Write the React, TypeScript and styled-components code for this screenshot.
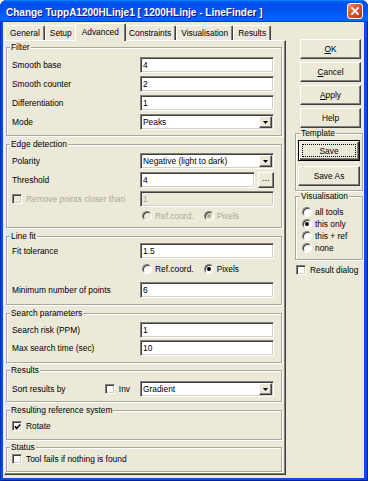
import React from 'react';
import styled, { createGlobalStyle } from 'styled-components';

const FACE = '#ece9d8';
const GREY_TEXT = '#aca899';

const GlobalStyle = createGlobalStyle`
  *, *::before, *::after { box-sizing: border-box; }
  html, body { margin: 0; padding: 0; background: #ffffff; }
  body {
    font-family: "Liberation Sans", Arial, sans-serif;
    font-size: 8.4px;
    color: #000;
  }
`;

const TABS = ['General', 'Setup', 'Advanced', 'Constraints', 'Visualisation', 'Results'];

interface DropdownProps {
  value: string;
}

const Dropdown = ({ value }: DropdownProps) => (
  <SelectBox>
    <SelectValue>{value}</SelectValue>
    <DropButton>
      <svg width="5" height="3" viewBox="0 0 5 3">
        <polygon points="0,0 5,0 2.5,3" fill="#000" />
      </svg>
    </DropButton>
  </SelectBox>
);

interface CheckProps {
  label: string;
  checked?: boolean;
  disabled?: boolean;
}

const Check = ({ label, checked, disabled }: CheckProps) => (
  <CheckLabel $disabled={disabled}>
    <CheckBox $disabled={disabled}>
      {checked && (
        <svg width="7" height="7" viewBox="0 0 7 7">
          <path d="M0.8 3.4 L2.7 5.3 L6.3 1.5" stroke="#000" strokeWidth="1.5" fill="none" />
        </svg>
      )}
    </CheckBox>
    {label}
  </CheckLabel>
);

const Radio = ({ label, checked, disabled }: CheckProps) => (
  <CheckLabel $disabled={disabled} $gap={3}>
    <RadioCircle $disabled={disabled}>{checked && <RadioDot $disabled={disabled} />}</RadioCircle>
    {label}
  </CheckLabel>
);

const App = () => (
  <>
    <GlobalStyle />
    <Window>
      <TitleBar>
        <Title>Change TuppA1200HLinje1 [ 1200HLinje - LineFinder ]</Title>
        <CloseButton type="button" aria-label="Close">
          <svg width="8" height="8" viewBox="0 0 8 8">
            <path d="M1 1 L7 7 M7 1 L1 7" stroke="#fff" strokeWidth="1.8" strokeLinecap="square" />
          </svg>
        </CloseButton>
      </TitleBar>
      <Body>
        <TabControl>
          <TabStrip>
            {TABS.map((tab) => (
              <Tab key={tab} $active={tab === 'Advanced'}>
                {tab}
              </Tab>
            ))}
          </TabStrip>
          <TabPanel>
            <Group $pt={5} $pb={5}>
              <Legend>Filter</Legend>
              <FieldGrid>
                <Label>Smooth base</Label>
                <Field defaultValue="4" />
                <Label>Smooth counter</Label>
                <Field defaultValue="2" />
                <Label>Differentiation</Label>
                <Field defaultValue="1" />
                <Label>Mode</Label>
                <Dropdown value="Peaks" />
              </FieldGrid>
            </Group>

            <Group $mt={4} $pb={5}>
              <Legend>Edge detection</Legend>
              <FieldGrid>
                <Label>Polarity</Label>
                <Dropdown value="Negative (light to dark)" />
                <Label>Threshold</Label>
                <FieldWithButton>
                  <Field defaultValue="4" />
                  <SmallButton type="button">...</SmallButton>
                </FieldWithButton>
                <Check label="Remove points closer than" disabled />
                <Field defaultValue="1" disabled />
                <span />
                <RadioRow>
                  <Radio label="Ref.coord." disabled />
                  <Radio label="Pixels" checked disabled />
                </RadioRow>
              </FieldGrid>
            </Group>

            <Group $mt={4} $pt={2} $pb={6}>
              <Legend>Line fit</Legend>
              <FieldGrid $gap={4}>
                <Label>Fit tolerance</Label>
                <Field defaultValue="1.5" />
                <span />
                <RadioRow $mb={3}>
                  <Radio label="Ref.coord." />
                  <Radio label="Pixels" checked />
                </RadioRow>
                <Label>Minimum number of points</Label>
                <Field defaultValue="6" />
              </FieldGrid>
            </Group>

            <Group $mt={4} $pb={6}>
              <Legend>Search parameters</Legend>
              <FieldGrid $gap={2}>
                <Label>Search risk (PPM)</Label>
                <Field defaultValue="1" />
                <Label>Max search time (sec)</Label>
                <Field defaultValue="10" />
              </FieldGrid>
            </Group>

            <Group $mt={3} $pt={6} $pb={4}>
              <Legend>Results</Legend>
              <FieldGrid>
                <SortCell>
                  <Label>Sort results by</Label>
                  <Check label="Inv" />
                </SortCell>
                <Dropdown value="Gradient" />
              </FieldGrid>
            </Group>

            <Group $mt={4} $pt={5} $pb={7}>
              <Legend>Resulting reference system</Legend>
              <Check label="Rotate" checked />
            </Group>

            <Group $mt={3} $pt={1} $pb={6}>
              <Legend>Status</Legend>
              <Check label="Tool fails if nothing is found" />
            </Group>
          </TabPanel>
        </TabControl>

        <SideColumn>
          <ButtonStack>
            <DialogButton type="button">
              <u>O</u>K
            </DialogButton>
            <DialogButton type="button">
              <u>C</u>ancel
            </DialogButton>
            <DialogButton type="button">
              <u>A</u>pply
            </DialogButton>
            <DialogButton type="button">Help</DialogButton>
          </ButtonStack>

          <SideGroup $mt={1} $pt={2} $pb={4}>
            <Legend $offset={2}>Template</Legend>
            <TemplateButtons>
              <DialogButton type="button" $default>
                Save
              </DialogButton>
              <DialogButton type="button">Save As</DialogButton>
            </TemplateButtons>
          </SideGroup>

          <SideGroup $mt={1} $pt={5} $pb={5}>
            <Legend $offset={2}>Visualisation</Legend>
            <RadioList>
              <Radio label="all tools" />
              <Radio label="this only" checked />
              <Radio label="this + ref" />
              <Radio label="none" />
            </RadioList>
          </SideGroup>

          <ResultDialog>
            <Check label="Result dialog" />
          </ResultDialog>
        </SideColumn>
      </Body>
    </Window>
  </>
);

export default App;

const Window = styled.div`
  width: 368px;
  height: 481px;
  display: flex;
  flex-direction: column;
  background: #0a4ee0;
  border-radius: 7px 7px 0 0;
  overflow: hidden;
  box-shadow: inset 1px 0 0 #0031c4, inset -1px 0 0 #00209e, inset 0 -1px 0 #00209e;
`;

const TitleBar = styled.div`
  height: 22px;
  flex: none;
  display: flex;
  align-items: center;
  justify-content: space-between;
  padding: 0 5px 0 6px;
  background: linear-gradient(
    180deg,
    #0997ff,
    #0053ee 8%,
    #0050ee 40%,
    #0066ff 88%,
    #0066ff 93%,
    #005bff 95%,
    #003dd7 96%,
    #003dd7
  );
`;

const Title = styled.span`
  padding-top: 3px;
  color: #fff;
  font-weight: bold;
  font-size: 10px;
  white-space: nowrap;
  text-shadow: 1px 1px 0 #0f1089;
`;

const CloseButton = styled.button`
  width: 16px;
  height: 16px;
  padding: 0;
  display: flex;
  align-items: center;
  justify-content: center;
  border: 1px solid #fff;
  border-radius: 3px;
  background: linear-gradient(135deg, #f4a68c 0%, #e2623f 30%, #d4451f 70%, #b83110 100%);
`;

const Body = styled.div`
  flex: 1;
  display: flex;
  gap: 9px;
  margin: 0 4px 4px 3px;
  padding: 0 1px 3px 1px;
  background: ${FACE};
`;

const TabControl = styled.div`
  width: 282px;
  display: flex;
  flex-direction: column;
`;

const TabStrip = styled.div`
  height: 18px;
  flex: none;
  display: flex;
  align-items: flex-end;
  padding-left: 1px;
`;

const Tab = styled.div<{ $active?: boolean }>`
  position: relative;
  z-index: ${({ $active }) => ($active ? 1 : 0)};
  height: ${({ $active }) => ($active ? 18 : 15)}px;
  margin: ${({ $active }) => ($active ? '0 -2px -1px' : '0')};
  padding: ${({ $active }) => ($active ? '0 6px 2px' : '0 4px')};
  display: flex;
  align-items: center;
  white-space: nowrap;
  background: ${FACE};
  border: 1px solid;
  border-bottom: none;
  border-color: #fff #404040 transparent #fff;
  border-radius: 2px 2px 0 0;
  box-shadow: inset -1px 0 0 #808080;
`;

const TabPanel = styled.div`
  flex: 1;
  display: flex;
  flex-direction: column;
  padding: 2px 3px 2px 1px;
  border: 1px solid;
  border-color: #fff #404040 #404040 #fff;
  box-shadow: inset -1px -1px 0 #808080;
`;

const Group = styled.fieldset<{ $mt?: number; $pt?: number; $pb?: number }>`
  margin: ${({ $mt }) => $mt ?? 0}px 0 0;
  padding: ${({ $pt }) => $pt ?? 4}px 7px ${({ $pb }) => $pb ?? 5}px 5px;
  min-width: 0;
  border: 1px solid #aca899;
  box-shadow: inset 1px 1px 0 #fff, 1px 1px 0 #fff;
`;

const SideGroup = styled(Group)`
  padding-left: 2px;
  padding-right: 2px;
`;

const Legend = styled.legend<{ $offset?: number }>`
  margin-left: ${({ $offset }) => $offset ?? -2}px;
  padding: 0 1px;
  line-height: 9px;
  background: ${FACE};
  white-space: nowrap;
`;

const FieldGrid = styled.div<{ $gap?: number }>`
  display: grid;
  grid-template-columns: 128px 134px;
  row-gap: ${({ $gap }) => $gap ?? 3}px;
  align-items: center;
`;

const Label = styled.span`
  white-space: nowrap;
`;

const Field = styled.input`
  width: 100%;
  height: 16px;
  margin: 0;
  padding: 0 2px;
  font: inherit;
  color: #000;
  background: #fff;
  border: 1px solid;
  border-color: #808080 #fff #fff #808080;
  box-shadow: inset 1px 1px 0 #404040, inset -1px -1px 0 #d4d0c8;
  outline: none;

  &:disabled {
    background: ${FACE};
    color: ${GREY_TEXT};
  }
`;

const FieldWithButton = styled.div`
  display: flex;
  gap: 3px;
`;

const raised = `
  background: ${FACE};
  border: 1px solid;
  border-color: #fff #404040 #404040 #fff;
  box-shadow: inset -1px -1px 0 #808080;
`;

const SmallButton = styled.button`
  ${raised};
  width: 16px;
  height: 16px;
  flex: none;
  padding: 0 0 3px;
  font: inherit;
  line-height: 1;
  color: #000;
`;

const SelectBox = styled.div`
  height: 16px;
  display: flex;
  align-items: stretch;
  padding: 1px 1px 1px 2px;
  background: #fff;
  border: 1px solid;
  border-color: #808080 #fff #fff #808080;
  box-shadow: inset 1px 1px 0 #404040, inset -1px -1px 0 #d4d0c8;
`;

const SelectValue = styled.span`
  flex: 1;
  display: flex;
  align-items: center;
  white-space: nowrap;
`;

const DropButton = styled.span`
  ${raised};
  width: 13px;
  display: flex;
  align-items: center;
  justify-content: center;
`;

const CheckLabel = styled.label<{ $disabled?: boolean; $gap?: number }>`
  height: 12px;
  display: flex;
  align-items: center;
  gap: ${({ $gap }) => $gap ?? 4}px;
  white-space: nowrap;
  color: ${({ $disabled }) => ($disabled ? GREY_TEXT : '#000')};
`;

const CheckBox = styled.span<{ $disabled?: boolean }>`
  width: 10px;
  height: 10px;
  flex: none;
  display: flex;
  align-items: center;
  justify-content: center;
  background: ${({ $disabled }) => ($disabled ? FACE : '#fff')};
  border: 1px solid;
  border-color: #808080 #fff #fff #808080;
  box-shadow: inset 1px 1px 0 #404040, inset -1px -1px 0 #d4d0c8;
`;

const RadioCircle = styled.span<{ $disabled?: boolean }>`
  width: 10px;
  height: 10px;
  flex: none;
  display: flex;
  align-items: center;
  justify-content: center;
  border-radius: 50%;
  background: ${({ $disabled }) => ($disabled ? FACE : '#fff')};
  border: 1px solid;
  border-color: #808080 #fff #fff #808080;
  box-shadow: inset 1px 1px 0 #404040;
`;

const RadioDot = styled.span<{ $disabled?: boolean }>`
  width: 4px;
  height: 4px;
  border-radius: 50%;
  background: ${({ $disabled }) => ($disabled ? GREY_TEXT : '#000')};
`;

const RadioRow = styled.div<{ $mb?: number }>`
  height: 12px;
  display: flex;
  align-items: center;
  gap: 10px;
  padding-left: 2px;
  margin-bottom: ${({ $mb }) => $mb ?? 0}px;
`;

const SortCell = styled.div`
  display: flex;
  align-items: center;
  justify-content: space-between;
  padding-right: 10px;
`;

const SideColumn = styled.div`
  width: 68px;
  display: flex;
  flex-direction: column;
  padding-top: 17px;
`;

const ButtonStack = styled.div`
  display: flex;
  flex-direction: column;
  gap: 3px;
  padding: 0 2px 0 5px;
`;

const DialogButton = styled.button<{ $default?: boolean }>`
  height: ${({ $default }) => ($default ? 21 : 20)}px;
  width: 100%;
  padding: 0;
  font: inherit;
  color: #000;
  background: ${FACE};
  border: 1px solid;
  border-color: ${({ $default }) => ($default ? '#000' : '#fff #404040 #404040 #fff')};
  box-shadow: ${({ $default }) =>
    $default
      ? 'inset 1px 1px 0 #fff, inset -1px -1px 0 #404040, inset -2px -2px 0 #808080'
      : 'inset -1px -1px 0 #808080'};
  outline: ${({ $default }) => ($default ? '1px dotted #000' : 'none')};
  outline-offset: -5px;
`;

const TemplateButtons = styled.div`
  display: flex;
  flex-direction: column;
  gap: 5px;
`;

const RadioList = styled.div`
  display: flex;
  flex-direction: column;
  padding-left: 4px;
`;

const ResultDialog = styled.div`
  margin-top: 4px;
  padding-left: 1px;
`;
